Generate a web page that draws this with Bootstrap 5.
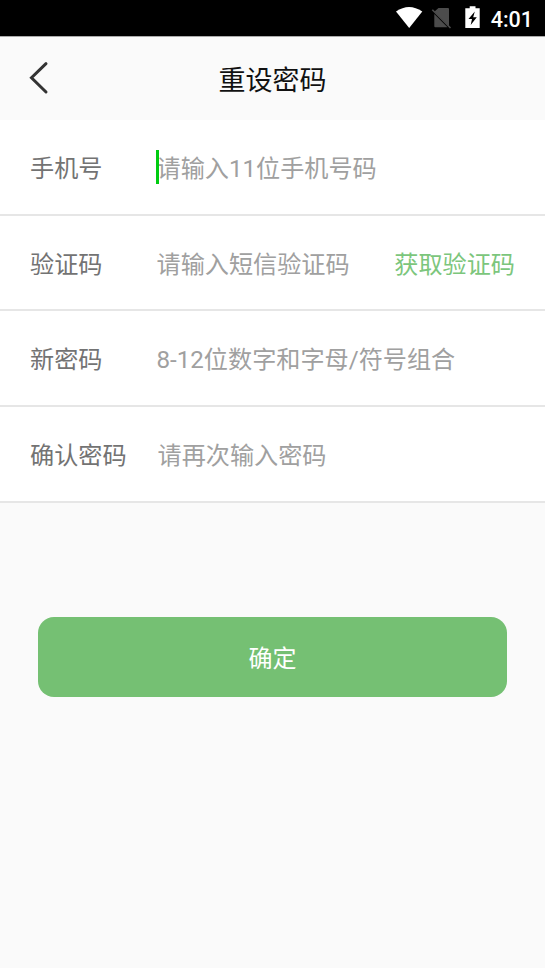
<!DOCTYPE html>
<html lang="zh-CN">
<head>
<meta charset="utf-8">
<meta name="viewport" content="width=device-width, initial-scale=1">
<title>重设密码</title>
<link href="https://cdn.jsdelivr.net/npm/bootstrap@5.3.0/dist/css/bootstrap.min.css" rel="stylesheet">
<style>
body{font-family:Roboto,"Noto Sans CJK SC",sans-serif;background:#fafafa;min-height:968px;overflow:hidden}
.statusbar{height:37px;background:#000;color:#fff;font-size:21.5px;font-weight:500;line-height:36px;padding-right:12px;border-bottom:1px solid #aaa}
.statusbar span{padding-top:3px}
.topbar{height:83px}
.topbar h1{font-size:27px;font-weight:400;color:#111;line-height:40px;padding-top:4px}
.back{left:27.5px;top:24px}
.field{height:96px;border-bottom:2px solid #e6e6e6;background:#fff;padding:4px 30px 0;font-size:24.15px;color:#737373}
.field-short{height:95px;padding-top:5px}
.field label{width:126.5px}
.field input{font-size:24.15px;line-height:36px;height:36px;color:#333;caret-color:transparent;outline:0;min-width:0}
.field input::placeholder{color:#a0a0a0;opacity:1}
.indent{padding-left:1px!important}
.caret{width:3px;height:34px;background:#0c1;left:-.5px;top:-1px}
.get-code{color:#7cc67c}
.submit,.submit:hover{margin:114px 38px 0;height:80px;width:469px;border-radius:16px;background:#75c073;color:#fff;font-size:24px;padding-top:10px}
</style>
</head>
<body>
<div class="statusbar d-flex align-items-center justify-content-end">
<svg class="flex-shrink-0" width="95" height="36" viewBox="396 0 95 36">
<path d="M396 11.5Q409 2.5 422.3 11.5L409.2 28Z" fill="#fff"/>
<path d="M438.5 8H448q1 0 1 1V26.2L434.5 11.5ZM434.3 14L447.5 27.3H435.3q-1 0-1-1Z" fill="#4c4c4c"/>
<path d="M432.3 9.7L450.5 28" stroke="#4c4c4c" stroke-width="1.6"/>
<path d="M465.3 8.3H469.7V6.3H475.5V8.3H479.7V28H465.3Z" fill="#fff"/>
<path d="M474.8 11.5L468.5 19H472L470.7 25L476.8 17.3H473.2Z" fill="#000"/>
</svg>
<span>4:01</span></div>
<header class="topbar position-relative d-flex align-items-center justify-content-center">
<svg class="back position-absolute" width="22" height="34" viewBox="0 0 22 34"><path d="M18 2.7L3.5 16.7L18 31" fill="none" stroke="#333" stroke-width="3" stroke-linecap="round"/></svg>
<h1 class="mb-0">重设密码</h1></header>
<form>
<div class="field d-flex align-items-center"><label class="flex-shrink-0" for="phone">手机号</label><div class="position-relative d-flex flex-fill"><input id="phone" class="border-0 p-0 w-100 bg-transparent" placeholder="请输入11位手机号码"><span class="caret position-absolute"></span></div></div>
<div class="field field-short d-flex align-items-center"><label class="flex-shrink-0" for="code">验证码</label><input id="code" class="border-0 p-0 flex-fill" placeholder="请输入短信验证码"><span class="get-code text-nowrap flex-shrink-0">获取验证码</span></div>
<div class="field d-flex align-items-center"><label class="flex-shrink-0" for="pass">新密码</label><input id="pass" class="border-0 p-0 flex-fill" placeholder="8-12位数字和字母/符号组合"></div>
<div class="field d-flex align-items-center"><label class="flex-shrink-0" for="confirm">确认密码</label><input id="confirm" class="border-0 p-0 indent flex-fill" placeholder="请再次输入密码"></div>
<button type="button" class="btn submit">确定</button>
</form>
<script src="https://cdn.jsdelivr.net/npm/bootstrap@5.3.0/dist/js/bootstrap.bundle.min.js"></script>
</body>
</html>
